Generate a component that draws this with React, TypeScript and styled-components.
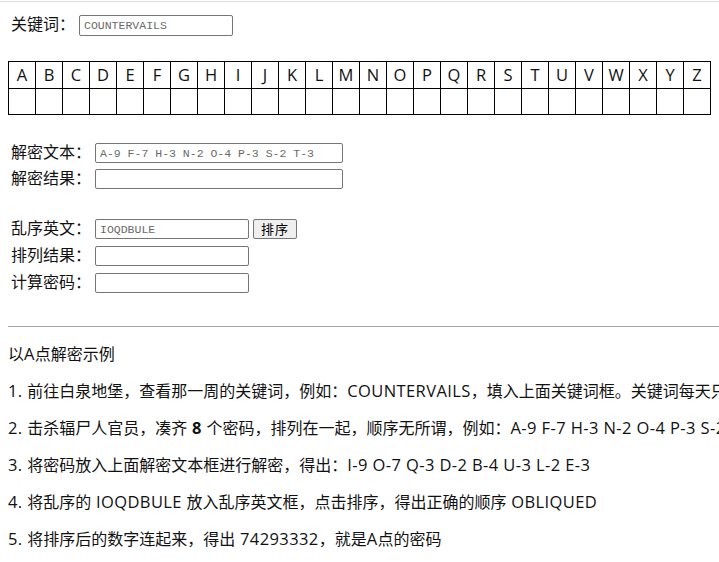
import React from "react";
import styled, { createGlobalStyle } from "styled-components";

const Global = createGlobalStyle`
  html, body {
    margin: 0;
    padding: 0;
    background: #fff;
    overflow: hidden;
  }
  body {
    font-family: "Open Sans", "Noto Sans CJK SC", sans-serif;
    color: #000;
    font-size: 16px;
  }
`;

const TopRule = styled.div`
  margin-top: 1px;
  height: 1px;
  background: #dedede;
`;

const Page = styled.div`
  padding-left: 8px;
`;

const FormRow = styled.div<{ $mt?: number; $h?: number }>`
  display: flex;
  align-items: flex-start;
  height: ${(p) => p.$h ?? 20}px;
  margin-top: ${(p) => p.$mt ?? 0}px;
  padding-left: 3px;
`;

const Label = styled.span`
  font-family: "Noto Sans CJK SC", sans-serif;
  font-size: 16px;
  line-height: 17px;
  color: #111;
  margin-right: 4px;
  white-space: nowrap;
`;

const Field = styled.input<{ $w: number; $h?: number }>`
  box-sizing: border-box;
  width: ${(p) => p.$w}px;
  height: ${(p) => p.$h ?? 20}px;
  border: 1px solid #767676;
  border-radius: 2px;
  padding: 0 4px;
  font-family: "Liberation Mono", monospace;
  font-size: 11.5px;
  color: #6a6a6a;
  background: #fff;
  outline: none;
`;

const Button = styled.button`
  box-sizing: border-box;
  margin-left: 4px;
  width: 44px;
  height: 20px;
  border: 1px solid #767676;
  border-radius: 2px;
  background: #efefef;
  font-family: "Noto Sans CJK SC", sans-serif;
  font-size: 13px;
  line-height: 18px;
  padding: 0;
  color: #000;
  letter-spacing: 1px;
`;

const Table = styled.table`
  margin-top: 25px;
  border-collapse: collapse;
  width: 703px;
  table-layout: fixed;
`;

const Cell = styled.td<{ $h: number }>`
  border: 1px solid #000;
  height: ${(p) => p.$h}px;
  padding: 0;
  text-align: center;
  font-family: "Open Sans", sans-serif;
  font-size: 16.5px;
  line-height: ${(p) => p.$h}px;
  color: #111;
`;

const Rule = styled.div`
  margin-top: 33px;
  height: 1px;
  width: 720px;
  background: #a3a3a3;
`;

const Notes = styled.div`
  margin-top: 16px;
  display: flex;
  flex-direction: column;
  gap: 16px;
`;

const Note = styled.p`
  margin: 0;
  font-family: "Noto Sans CJK SC", sans-serif;
  font-size: 16px;
  line-height: 21px;
  white-space: nowrap;
  color: #111;
`;

const Latin = styled.span<{ $bold?: boolean }>`
  font-family: "Open Sans", sans-serif;
  font-size: 16.5px;
  letter-spacing: 0.4px;
  font-weight: ${(p) => (p.$bold ? 700 : 400)};
`;

const letters = "ABCDEFGHIJKLMNOPQRSTUVWXYZ".split("");

export default function App() {
  return (
    <>
      <Global />
      <TopRule />
      <Page>
        <FormRow $mt={13} $h={21}>
          <Label>关键词：</Label>
          <Field $w={154} $h={21} defaultValue="COUNTERVAILS" />
        </FormRow>

        <Table>
          <tbody>
            <tr>
              {letters.map((l) => (
                <Cell key={l} $h={26}>
                  {l}
                </Cell>
              ))}
            </tr>
            <tr>
              {letters.map((l) => (
                <Cell key={l} $h={25} />
              ))}
            </tr>
          </tbody>
        </Table>

        <FormRow $mt={28}>
          <Label>解密文本：</Label>
          <Field $w={248} defaultValue="A-9 F-7 H-3 N-2 O-4 P-3 S-2 T-3" />
        </FormRow>
        <FormRow $mt={6}>
          <Label>解密结果：</Label>
          <Field $w={248} />
        </FormRow>

        <FormRow $mt={30}>
          <Label>乱序英文：</Label>
          <Field $w={154} defaultValue="IOQDBULE" />
          <Button>排序</Button>
        </FormRow>
        <FormRow $mt={7}>
          <Label>排列结果：</Label>
          <Field $w={154} />
        </FormRow>
        <FormRow $mt={7}>
          <Label>计算密码：</Label>
          <Field $w={154} />
        </FormRow>

        <Rule />

        <Notes>
          <Note>
            以<Latin>A</Latin>点解密示例
          </Note>
          <Note>
            <Latin>1. </Latin>前往白泉地堡，查看那一周的关键词，例如：<Latin>COUNTERVAILS</Latin>，填入上面关键词框。关键词每天只有一个，每周更换
          </Note>
          <Note>
            <Latin>2. </Latin>击杀辐尸人官员，凑齐<Latin> </Latin>
            <Latin $bold>8</Latin>
            <Latin> </Latin>个密码，排列在一起，顺序无所谓，例如：<Latin>A-9 F-7 H-3 N-2 O-4 P-3 S-2 T-3</Latin>
          </Note>
          <Note>
            <Latin>3. </Latin>将密码放入上面解密文本框进行解密，得出：<Latin>I-9 O-7 Q-3 D-2 B-4 U-3 L-2 E-3</Latin>
          </Note>
          <Note>
            <Latin>4. </Latin>将乱序的<Latin> IOQDBULE </Latin>放入乱序英文框，点击排序，得出正确的顺序<Latin> OBLIQUED</Latin>
          </Note>
          <Note>
            <Latin>5. </Latin>将排序后的数字连起来，得出<Latin> 74293332</Latin>，就是<Latin>A</Latin>点的密码
          </Note>
        </Notes>
      </Page>
    </>
  );
}
